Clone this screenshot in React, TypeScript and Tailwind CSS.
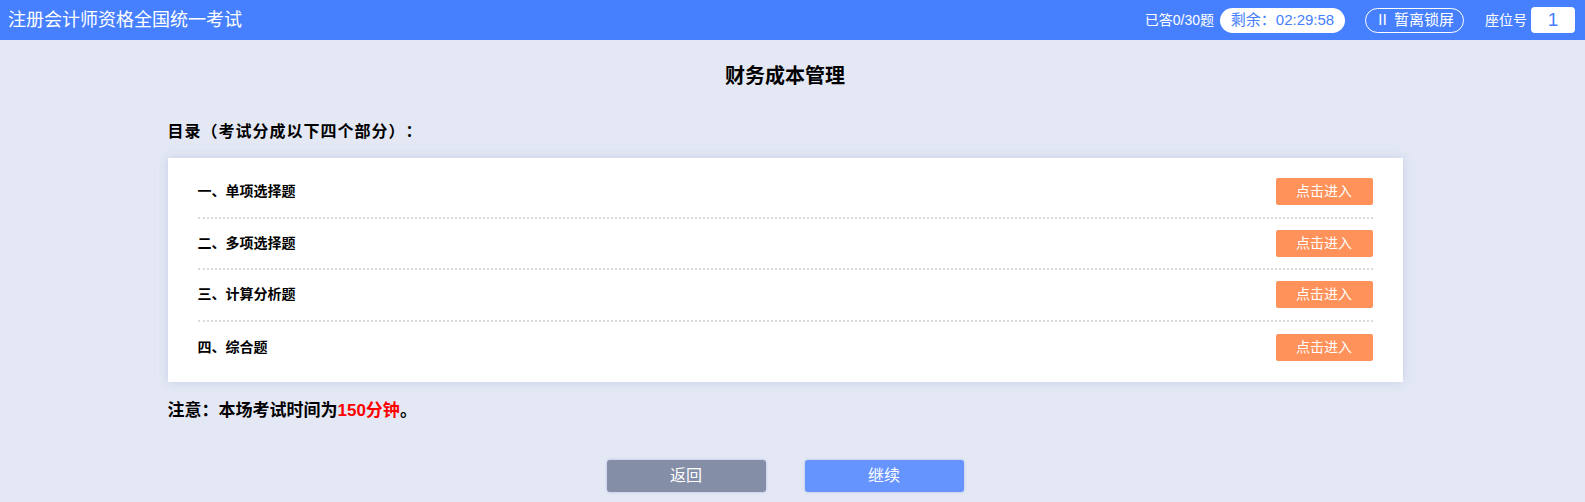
import React from "react";

const rows = ["一、单项选择题", "二、多项选择题", "三、计算分析题", "四、综合题"];

export default function App() {
  return (
    <div
      className="h-[502px] w-full overflow-hidden bg-[#e4e8f4] text-black"
      style={{ fontFamily: '"Liberation Sans", "Noto Sans CJK SC", sans-serif' }}
    >
      <header className="flex h-[40px] items-center justify-between bg-[#4680ff] pl-[8px] pr-[10px] text-white">
        <div className="text-[18px] leading-none">注册会计师资格全国统一考试</div>
        <div className="flex items-center text-[14px]">
          <span>已答0/30题</span>
          <span className="ml-[6px] flex h-[25px] w-[125px] items-center justify-center rounded-full bg-white text-[15px] text-[#4680ff]">
            剩余：02:29:58
          </span>
          <span className="ml-[20px] flex h-[25px] w-[99px] items-center justify-center rounded-full border border-white text-[15px]">
            Ⅱ 暂离锁屏
          </span>
          <span className="ml-[21px]">座位号</span>
          <span className="ml-[4px] flex h-[26px] w-[44px] items-center justify-center rounded-[4px] bg-white text-[19px] text-[#4680ff]">
            1
          </span>
        </div>
      </header>
      <main className="mr-[15px] flex flex-col items-center">
        <h1 className="mt-[22px] text-[20px] font-bold leading-[28px]">财务成本管理</h1>
        <div className="mt-[31px] w-[1235px]">
          <div className="text-[16px] font-bold leading-[22px] tracking-[1px] [text-spacing-trim:space-all]">
            目录（考试分成以下四个部分）：
          </div>
          <div className="mt-[15px] bg-white px-[30px] py-[9px] shadow-[0_0_10px_rgba(180,190,225,0.6)]">
            {rows.map((r, i) => (
              <div
                key={r}
                className={`flex h-[51.5px] items-center justify-between ${
                  i < rows.length - 1 ? "border-b-2 border-dotted border-[#d9d9d9]" : ""
                }`}
              >
                <span className="text-[14px] font-bold">{r}</span>
                <button className="flex h-[27px] w-[97px] items-center justify-center rounded-[2px] bg-[#ff915a] text-[14px] text-white">
                  点击进入
                </button>
              </div>
            ))}
          </div>
          <div className="mt-[18px] text-[17px] font-bold leading-[22px]">
            注意：本场考试时间为<span className="text-[#ff0000]">150分钟</span>。
          </div>
        </div>
        <div className="mt-[38px] flex gap-[39px]">
          <button className="flex h-[32px] w-[159px] items-center justify-center rounded-[3px] bg-[#848ea6] text-[16px] text-white shadow-[0_0_3px_rgba(140,160,230,0.6)]">
            返回
          </button>
          <button className="flex h-[32px] w-[159px] items-center justify-center rounded-[3px] bg-[#6694ff] text-[16px] text-white shadow-[0_0_3px_rgba(140,160,230,0.6)]">
            继续
          </button>
        </div>
      </main>
    </div>
  );
}
